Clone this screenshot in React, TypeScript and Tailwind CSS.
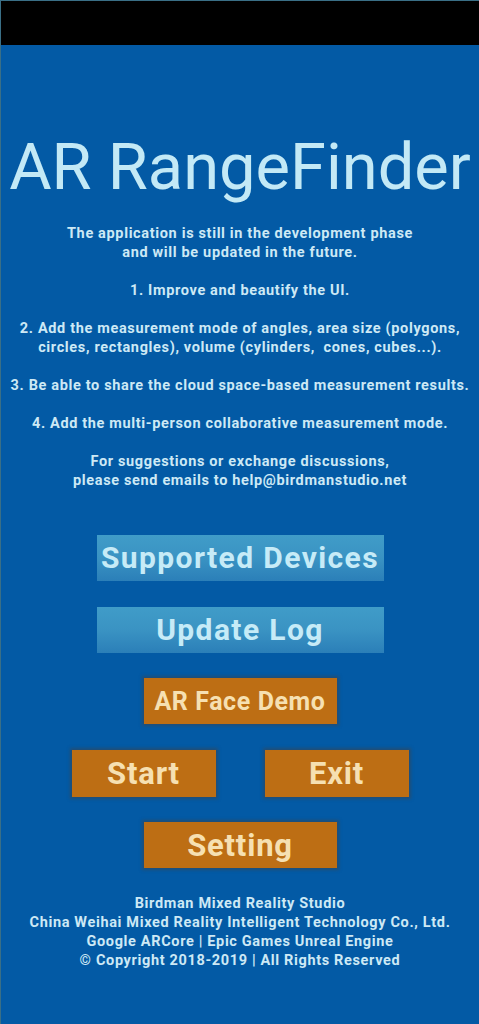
import React from "react";

const blueBtn =
  "flex items-center justify-center w-[287px] h-[46px] bg-gradient-to-b from-[#409cc8] via-[#3a93c3] to-[#2b7fb8] text-[#c6ebf7] text-[30px] tracking-[1.4px] font-bold leading-none";
const orangeBtn =
  "flex items-center justify-center h-[46px] bg-[#bd6e14] text-[#f6e0b2] font-bold leading-none shadow-[0_0_3px_2px_rgba(60,70,80,0.55)]";
const smallText =
  "text-center text-[#cde9f5] text-[14.5px] leading-[19px] font-bold tracking-[0.65px] whitespace-pre";

export default function App() {
  return (
    <div
      className="w-[479px] h-[1024px] bg-[#035aa5] flex flex-col overflow-hidden border-l border-[#3a6f86]"
      style={{ fontFamily: "Roboto, 'Liberation Sans', sans-serif" }}
    >
      <div className="h-[45px] bg-black border-t border-[#3a6f86] shrink-0" />
      <h1 className="mt-[84px] text-center text-[#c3e9f6] text-[65px] leading-[76px] font-normal">
        AR RangeFinder
      </h1>
      <div className={`mt-[19px] ${smallText}`}>
        {`The application is still in the development phase
and will be updated in the future.

1. Improve and beautify the UI.

2. Add the measurement mode of angles, area size (polygons,
circles, rectangles), volume (cylinders,  cones, cubes...).

3. Be able to share the cloud space-based measurement results.

4. Add the multi-person collaborative measurement mode.

For suggestions or exchange discussions,
please send emails to help@birdmanstudio.net`}
      </div>
      <div className="mt-[45px] flex flex-col items-center">
        <div className={blueBtn}>Supported Devices</div>
        <div className={`${blueBtn} mt-[26px]`}>Update Log</div>
        <div className={`${orangeBtn} w-[193px] mt-[25px] text-[25px] tracking-[0.6px]`}>AR Face Demo</div>
        <div className="mt-[26px] flex gap-[49px]">
          <div className={`${orangeBtn} w-[144px] h-[47px] text-[31px] tracking-[0.8px]`}>Start</div>
          <div className={`${orangeBtn} w-[144px] h-[47px] text-[31px] tracking-[0.8px]`}>Exit</div>
        </div>
        <div className={`${orangeBtn} w-[193px] mt-[25px] text-[31px] tracking-[0.8px]`}>Setting</div>
      </div>
      <div className={`mt-[26px] ${smallText}`}>
        {`Birdman Mixed Reality Studio
China Weihai Mixed Reality Intelligent Technology Co., Ltd.
Google ARCore | Epic Games Unreal Engine
© Copyright 2018-2019 | All Rights Reserved`}
      </div>
    </div>
  );
}
